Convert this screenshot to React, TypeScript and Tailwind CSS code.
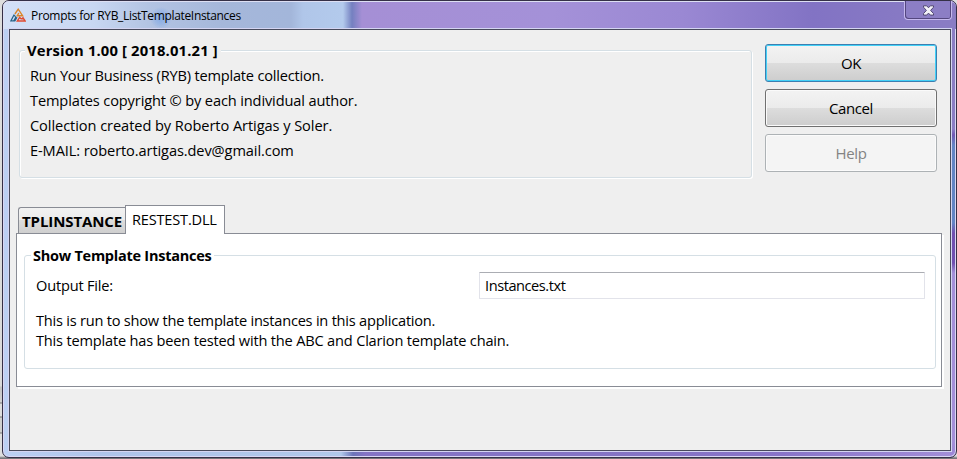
import type { ReactNode } from "react";

function AppIcon() {
  return (
    <svg width="16" height="15" viewBox="0 0 16 15" fill="none" strokeLinejoin="miter" className="shrink-0">
      <path d="M4.9 6 8.2 1.2 12.6 7.7H7.2L8.9 5" stroke="#dc8528" strokeWidth="1.4" />
      <path d="M4.2 6.4.9 12.9h4L7 9.2M4.4 7.2l1.4 2.2-1.9 3.2" stroke="#286488" strokeWidth="1.2" />
      <path d="M12.6 9.2 15.1 13H7.3l2.3-3.6 1.5 1.4h2" stroke="#e04c32" strokeWidth="1.4" />
    </svg>
  );
}

function CloseButton() {
  return (
    <button
      aria-label="Close"
      className="flex h-[19px] w-[48px] items-start justify-center rounded-b-[4px] border border-t-0 border-[#c5b9ed] bg-[#8c7ec5] pt-[4px] shadow-[inset_1px_-1px_0_#54477f,inset_-1px_0_0_#54477f]"
    >
      <svg width="13" height="11" viewBox="0 0 13 11">
        <path
          d="M1.5.8h3.2l1.8 2 1.8-2h3.2v1.4L8.6 5.4l2.9 3.2v1.5H8.3l-1.8-2-1.8 2H1.5V8.6l2.9-3.2-2.9-3.2z"
          fill="#f3f2f8"
          stroke="#514873"
        />
      </svg>
    </button>
  );
}

function Group({ title, className, titleClass, children }: { title: string; className: string; titleClass: string; children: ReactNode }) {
  return (
    <section className={`rounded-[3px] border border-[#d5dfe5] shadow-[inset_1px_1px_0_#fff,1px_1px_0_#fff] ${className}`}>
      <h2 className={`-mt-[11px] h-[21px] w-fit whitespace-nowrap font-bold leading-[21px] ${titleClass}`}>{title}</h2>
      {children}
    </section>
  );
}

const buttonBase = "flex h-[38px] w-[172px] items-center justify-center rounded-[3px] border text-[15px]";
const buttonFace = "bg-[linear-gradient(#f3f3f3_0%,#ebebeb_49%,#dddddd_50%,#cdcdcd_100%)]";

export default function App() {
  return (
    <div className="h-[459px] w-[957px] overflow-hidden bg-[linear-gradient(#dedede_0px,#dadada_386px,#c4c4c4_387px,#d2d2d2_402px,#777_403px,#dedede_404px,#dedede_416px,#777_417px,#cfcfcf_418px,#cfcfcf_432px,#777_433px,#dedede_434px,#dedede_456px,#77777b_458px)] pl-[2px] font-['Open_Sans','Noto_Sans',sans-serif] text-black">
      <div className="h-[458px] w-[955px] rounded-[7px] border border-[#353047] bg-[linear-gradient(#8a7dc4_0px,#8a7dc4_128px,#7058b4_134px,#6384c4_144px,#6384c4_222px,#7050b0_232px,#7050b0_262px,#a38fd8_272px,#a38fd8_440px,#9a84d6_457px),linear-gradient(90deg,#bcd0f3_0px,#aec4ea_100px,#b0c8ea_338px,#6c74b8_350px,#8474c4_362px,#8474c4_600px,#8874c8_780px,#a38fd8_955px)] bg-[length:6px_100%,100%_100%] bg-[position:right_top,left_top] bg-no-repeat shadow-[inset_0_0_0_1px_#d9d7f3]">
        <header className="flex h-[28px] items-start justify-between rounded-t-[6px] bg-[radial-gradient(circle_at_158px_17px,#6f9fe6aa_0px,#7fa8e677_6px,transparent_11px),linear-gradient(90deg,#d3e0f7_0px,#c8d7f2_90px,#b3c4e3_145px,#a5b7da_220px,#a3b6da_288px,#b0c6e9_300px,#b3caec_340px,#7480c0_349px,#a58fd5_359px,#a491d8_550px,#9a88d3_680px,#8273c4_810px,#8a7dc4_950px)] pl-[7px] pr-[4px] shadow-[inset_1px_1px_0_#dddff3]">
          <div className="flex items-start pt-[7px]">
            <AppIcon />
            <h1 className="ml-[5px] whitespace-nowrap text-[12px] leading-[15px] tracking-[-0.33px]">Prompts for RYB_ListTemplateInstances</h1>
          </div>
          <CloseButton />
        </header>

        <main className="ml-[6px] h-[422px] w-[942px] border border-[#484a5c] bg-[#efefef] pl-[6px] pt-[14px] shadow-[0_0_0_1px_#d4d5f2]">
          <div className="flex h-[161px] items-start justify-between pl-[3px] pr-[13px]">
            <Group title="Version 1.00 [ 2018.01.21 ]" className="mt-[6px] h-[128px] w-[733px]" titleClass="ml-[5px] bg-[#efefef] pl-[2px] pr-[3px] text-[14.8px] tracking-[0.15px]">
              <div className="ml-[10px] mt-[2px] flex flex-col whitespace-nowrap text-[14.6px] leading-[25px]">
                <p className="tracking-[-0.2px]">Run Your Business (RYB) template collection.</p>
                <p className="tracking-[-0.13px]">Templates copyright © by each individual author.</p>
                <p className="tracking-[-0.07px]">Collection created by Roberto Artigas y Soler.</p>
                <p className="tracking-[-0.1px]">E-MAIL: roberto.artigas.dev@gmail.com</p>
              </div>
            </Group>
            <div className="flex flex-col gap-[7px]">
              <button className={`${buttonBase} ${buttonFace} border-[#3c7fb1] tracking-[-0.5px] shadow-[inset_0_0_0_1px_#43d1f7]`}>OK</button>
              <button className={`${buttonBase} ${buttonFace} border-[#707070] tracking-[-0.4px] shadow-[inset_0_0_0_1px_#fafafa]`}>Cancel</button>
              <button disabled className={`${buttonBase} border-[#adb2b5] bg-[#f4f4f4] tracking-[-0.4px] text-[#838383] shadow-[inset_0_0_0_1px_#fbfbfb]`}>Help</button>
            </div>
          </div>

          <nav className="relative z-10 flex h-[29px] items-end pl-[2px]">
            <button className="mb-px h-[26px] w-[107px] whitespace-nowrap rounded-tl-[3px] border border-b-0 border-r-0 border-[#898c95] bg-[linear-gradient(#f2f2f2_0%,#ebebeb_48%,#dddddd_50%,#cfcfcf_100%)] pb-px pl-[3px] pt-px text-left text-[15px] font-bold leading-[22px] tracking-[-0.1px]">TPLINSTANCE</button>
            <button className="h-[29px] w-[100px] whitespace-nowrap border border-b-0 border-[#898c95] bg-white pb-[1px] pl-[6px] text-left text-[14.6px] tracking-[-0.2px]">RESTEST.DLL</button>
          </nav>
          <div className="-mt-px h-[154px] w-[926px] border border-[#898c95] bg-white pl-[7px] pt-[21px] shadow-[2px_2px_0_#fff]">
            <Group title="Show Template Instances" className="h-[114px] w-[912px]" titleClass="ml-[6px] bg-white pl-[2px] pr-[3px] text-[14.5px] tracking-[-0.25px]">
              <label className="mt-[6px] flex h-[27px] items-center justify-between pl-[11px] pr-[10px] text-[14.6px]">
                <span className="tracking-[-0.2px]">Output File:</span>
                <input readOnly value="Instances.txt" className="h-[27px] w-[446px] rounded-[1px] border border-[#e2e3ea] border-t-[#abadb3] bg-white px-[5px] pb-[2px] tracking-[-0.45px] outline-none" />
              </label>
              <div className="ml-[11px] mt-[11px] whitespace-nowrap text-[14.6px] leading-[20px]">
                <p className="tracking-[-0.23px]">This is run to show the template instances in this application.</p>
                <p className="tracking-[-0.19px]">This template has been tested with the ABC and Clarion template chain.</p>
              </div>
            </Group>
          </div>
        </main>
      </div>
    </div>
  );
}
